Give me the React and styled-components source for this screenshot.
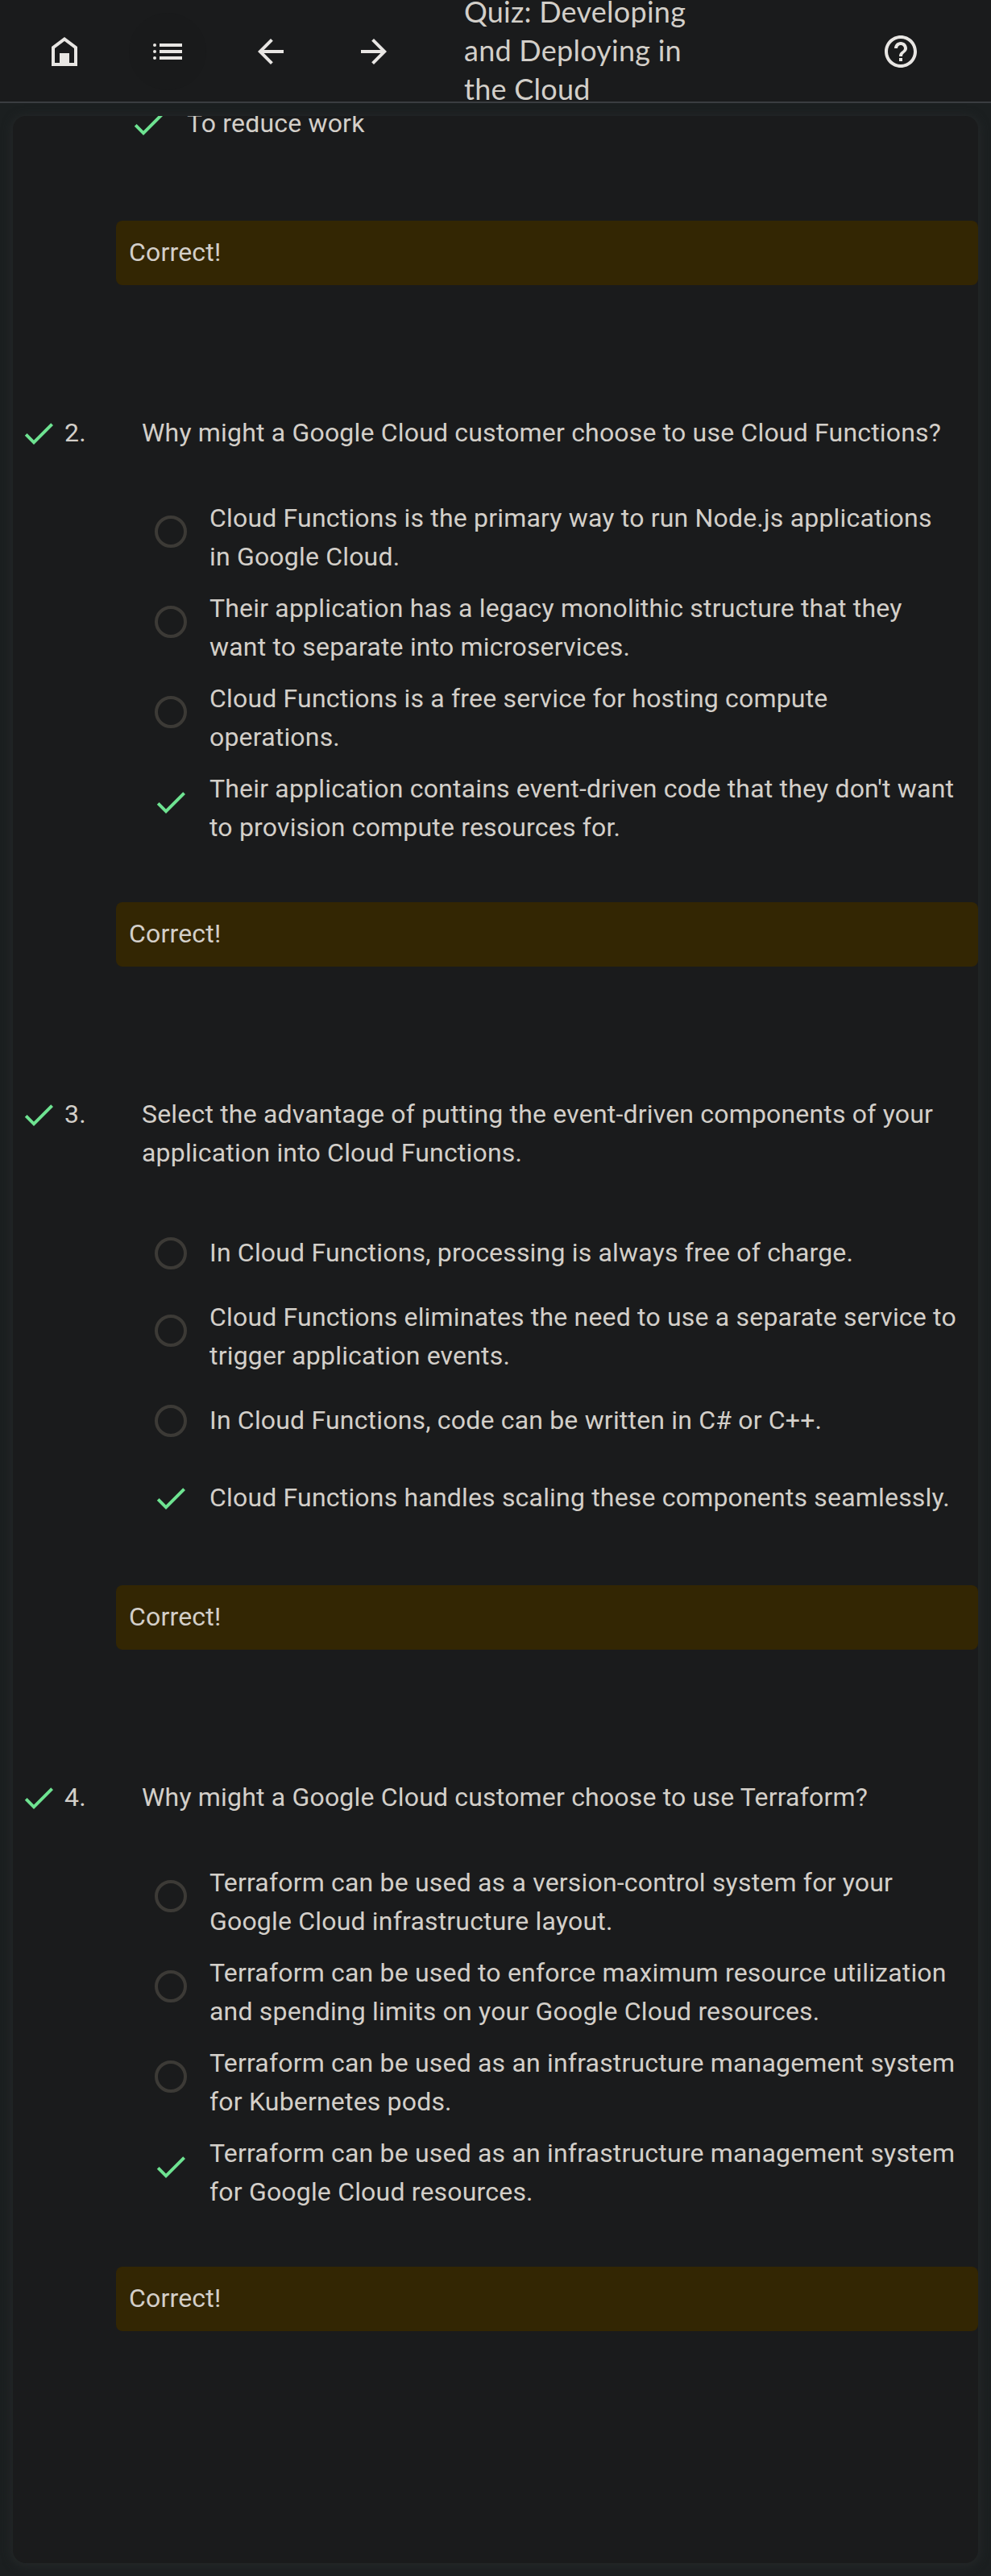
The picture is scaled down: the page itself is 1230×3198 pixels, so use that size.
import React from "react";
import styled, { createGlobalStyle } from "styled-components";

const GlobalStyle = createGlobalStyle`
  *, *::before, *::after { box-sizing: border-box; }
  body {
    margin: 0;
    background: #1b1f20;
    color: #d3cfc9;
    font-family: Roboto, "Liberation Sans", sans-serif;
    font-size: 32px;
    line-height: 48px;
    letter-spacing: 0.185px;
  }
`;

const Page = styled.div`
  height: 3198px;
  display: flex;
  flex-direction: column;
  overflow: hidden;
`;

const Header = styled.header`
  height: 128px;
  flex: none;
  display: flex;
  align-items: center;
  gap: 32px;
  padding: 0 64px 0 32px;
  background: #1a1b1c;
  border-bottom: 2px solid #3a3d40;
  color: #e8e6e3;
`;

const IconButton = styled.button`
  width: 96px;
  height: 96px;
  flex: none;
  display: flex;
  align-items: center;
  justify-content: center;
  padding: 0;
  margin-top: 2px;
  border: 0;
  border-radius: 50%;
  color: inherit;
  background: ${(p) => (p.$active ? "#191a1b" : "transparent")};
`;

const Title = styled.h1`
  width: 300px;
  margin: -2px auto 0 32px;
  font-family: Lato, sans-serif;
  font-size: 36px;
  font-weight: 400;
  line-height: 48px;
  letter-spacing: 0.25px;
  color: #d3cfc9;
`;

const Card = styled.main`
  flex: 1;
  margin: 16px;
  overflow: hidden;
  border-radius: 16px;
  background: #1a1b1c;
  box-shadow: 0 2px 12px 2px #252829;
`;

const Scroller = styled.div`
  margin-top: -30px;
`;

const FirstOptions = styled.div`
  padding: 0 0 80px 128px;
`;

const Question = styled.section`
  padding-top: 160px;
`;

const Prompt = styled.div`
  display: grid;
  grid-template-columns: 56px 96px 1fr;
  padding: 0 40px 0 8px;
`;

const PromptText = styled.span`
  margin: -1px 0 1px;
`;

const Options = styled.ul`
  list-style: none;
  margin: 0;
  padding: ${(p) => p.$top}px 0 68px 156px;
  display: flex;
  flex-direction: column;
  gap: 16px;
`;

const Option = styled.li`
  display: flex;
  align-items: flex-start;
`;

const Marker = styled.span`
  width: 80px;
  height: 80px;
  flex: none;
  display: flex;
  align-items: center;
  justify-content: center;
`;

const Radio = styled.span`
  width: 40px;
  height: 40px;
  border: 4px solid #3c3a36;
  border-radius: 50%;
`;

const OptionText = styled.span`
  min-height: 80px;
  display: flex;
  align-items: center;
  margin: -1px 0 1px;
  padding-left: 8px;
  white-space: pre-line;
`;

const Feedback = styled.div`
  margin-left: 128px;
  padding: 15px 16px 17px;
  border-radius: 8px;
  background: #332603;
`;

const Svg = styled.svg`
  width: 48px;
  height: 48px;
  display: block;
  fill: ${(p) => p.$color || "currentColor"};
`;

const paths = {
  home: "M4 21V9l8-6 8 6v12H4zm2-2h3v-6h6v6h3v-9l-6-4.5L6 10v9zM9 13h6v6H9z",
  list: "M7 7h14v2H7zM7 11h14v2H7zM7 15h14v2H7zM4 7a1 1 0 1 0 0 2a1 1 0 0 0 0-2zM4 11a1 1 0 1 0 0 2a1 1 0 0 0 0-2zM4 15a1 1 0 1 0 0 2a1 1 0 0 0 0-2z",
  back: "M20 11H7.83l5.59-5.59L12 4l-8 8 8 8 1.41-1.41L7.83 13H20v-2z",
  forward: "M12 4l-1.41 1.41L16.17 11H4v2h12.17l-5.58 5.59L12 20l8-8z",
  help: "M11 18h2v-2h-2v2zm1-16C6.48 2 2 6.48 2 12s4.48 10 10 10 10-4.48 10-10S17.52 2 12 2zm0 18c-4.41 0-8-3.59-8-8s3.59-8 8-8 8 3.59 8 8-3.59 8-8 8zm0-14c-2.21 0-4 1.79-4 4h2c0-1.1.9-2 2-2s2 .9 2 2c0 2-3 1.75-3 5h2c0-2.25 3-2.5 3-5 0-2.21-1.79-4-4-4z",
  check: "M9 16.2L4.8 12l-1.4 1.4L9 19 21 7l-1.4-1.4L9 16.2z",
};

const Icon = ({ name, color }) => (
  <Svg viewBox="0 0 24 24" $color={color} aria-hidden="true">
    <path d={paths[name]} />
  </Svg>
);

const Check = () => <Icon name="check" color="#6ee391" />;

const questions = [
  {
    number: "2.",
    top: 58,
    text: "Why might a Google Cloud customer choose to use Cloud Functions?",
    options: [
      "Cloud Functions is the primary way to run Node.js applications\nin Google Cloud.",
      "Their application has a legacy monolithic structure that they\nwant to separate into microservices.",
      "Cloud Functions is a free service for hosting compute\noperations.",
      "Their application contains event-driven code that they don't want\nto provision compute resources for.",
    ],
  },
  {
    number: "3.",
    top: 60,
    text: "Select the advantage of putting the event-driven components of your application into Cloud Functions.",
    options: [
      "In Cloud Functions, processing is always free of charge.",
      "Cloud Functions eliminates the need to use a separate service to\ntrigger application events.",
      "In Cloud Functions, code can be written in C# or C++.",
      "Cloud Functions handles scaling these components seamlessly.",
    ],
  },
  {
    number: "4.",
    top: 58,
    text: "Why might a Google Cloud customer choose to use Terraform?",
    options: [
      "Terraform can be used as a version-control system for your\nGoogle Cloud infrastructure layout.",
      "Terraform can be used to enforce maximum resource utilization\nand spending limits on your Google Cloud resources.",
      "Terraform can be used as an infrastructure management system\nfor Kubernetes pods.",
      "Terraform can be used as an infrastructure management system\nfor Google Cloud resources.",
    ],
  },
];

export default function App() {
  return (
    <>
      <GlobalStyle />
      <Page>
        <Header>
          <IconButton aria-label="Home"><Icon name="home" /></IconButton>
          <IconButton aria-label="Contents" $active><Icon name="list" /></IconButton>
          <IconButton aria-label="Previous"><Icon name="back" /></IconButton>
          <IconButton aria-label="Next"><Icon name="forward" /></IconButton>
          <Title>Quiz: Developing and Deploying in the Cloud</Title>
          <IconButton aria-label="Help"><Icon name="help" /></IconButton>
        </Header>
        <Card>
          <Scroller>
            <FirstOptions>
              <Option as="div">
                <Marker><Check /></Marker>
                <OptionText>To reduce work</OptionText>
              </Option>
            </FirstOptions>
            <Feedback>Correct!</Feedback>
            {questions.map((q) => (
              <Question key={q.number}>
                <Prompt>
                  <Check />
                  <PromptText>{q.number}</PromptText>
                  <PromptText>{q.text}</PromptText>
                </Prompt>
                <Options $top={q.top}>
                  {q.options.map((text, i) => (
                    <Option key={i}>
                      <Marker>{i === q.options.length - 1 ? <Check /> : <Radio />}</Marker>
                      <OptionText>{text}</OptionText>
                    </Option>
                  ))}
                </Options>
                <Feedback>Correct!</Feedback>
              </Question>
            ))}
          </Scroller>
        </Card>
      </Page>
    </>
  );
}
